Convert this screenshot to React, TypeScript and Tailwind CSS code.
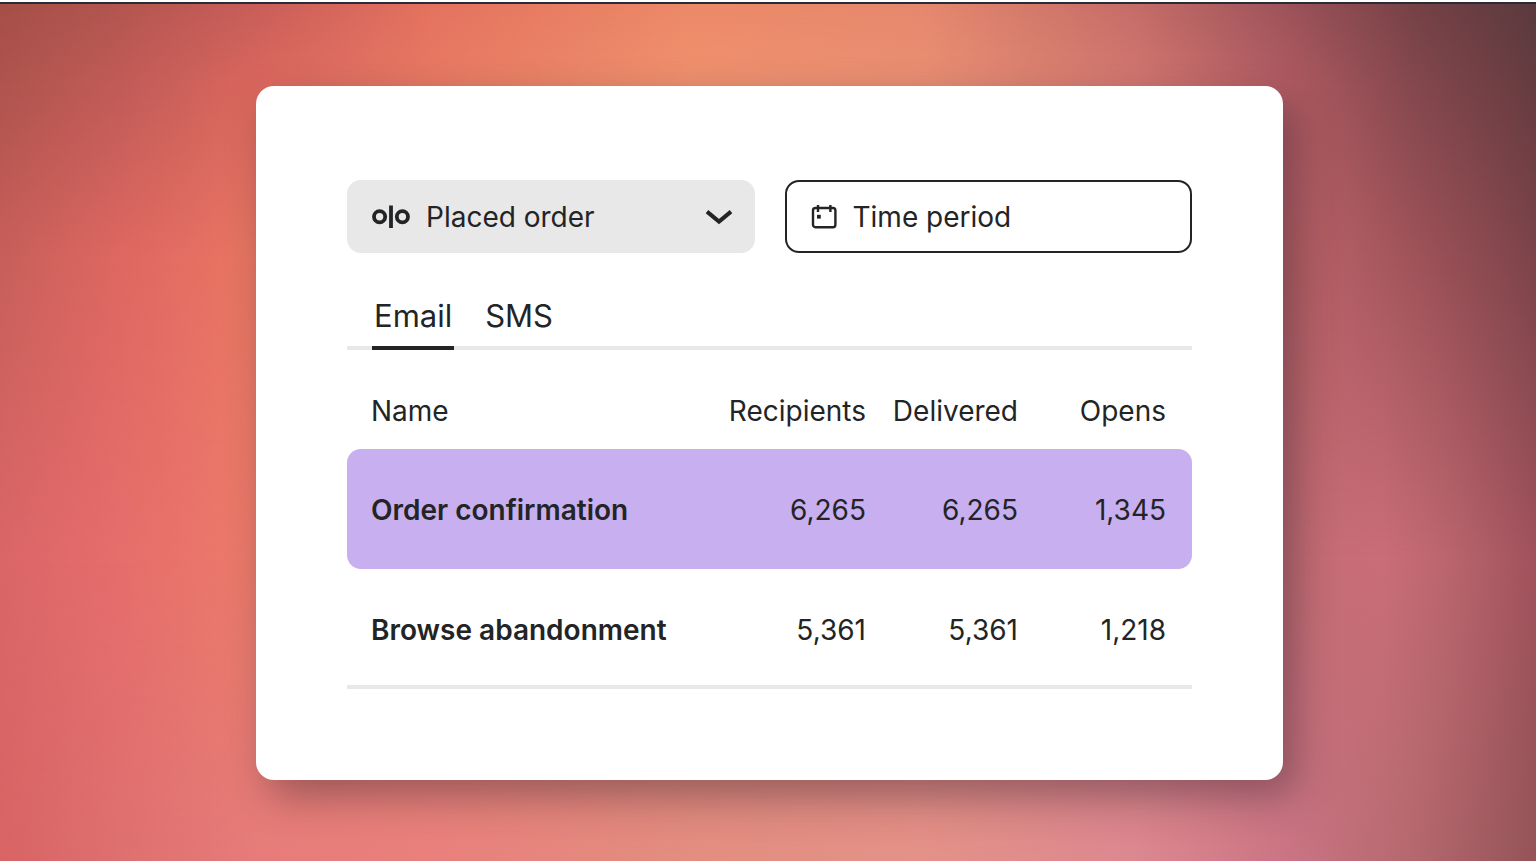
import React, { useState } from 'react';

interface FlowRow {
  name: string;
  recipients: string;
  delivered: string;
  opens: string;
}

const REPORTS: Record<string, FlowRow[]> = {
  Email: [
    { name: 'Order confirmation', recipients: '6,265', delivered: '6,265', opens: '1,345' },
    { name: 'Browse abandonment', recipients: '5,361', delivered: '5,361', opens: '1,218' },
  ],
  SMS: [],
};

const OloLogo: React.FC = () => (
  <svg width="38" height="24" viewBox="0 0 38 24" fill="none" stroke="#232426" strokeWidth="3.8" aria-hidden="true">
    <circle cx="7.6" cy="11.8" r="5.6" />
    <circle cx="30.4" cy="11.8" r="5.6" />
    <path d="M19 0.5v22.5" />
  </svg>
);

const ChevronIcon: React.FC = () => (
  <svg width="28" height="16" viewBox="0 0 28 16" fill="none" stroke="#232426" strokeWidth="4" aria-hidden="true">
    <path d="M2 2.6 14 12.6 26 2.6" />
  </svg>
);

const CalendarIcon: React.FC = () => (
  <svg width="26" height="24" viewBox="0 0 26 24" fill="none" stroke="#232426" strokeWidth="2.4" aria-hidden="true">
    <rect x="2" y="3" width="22.4" height="19.2" rx="2.4" />
    <path d="M7 0v7M19.4 0v7" />
    <rect x="6" y="9.8" width="3.8" height="3.8" fill="#232426" stroke="none" />
  </svg>
);

// Horizontal gradients stacked on top of each other, each one fading in over the one before
const Backdrop: React.FC = () => (
  <div className="absolute inset-0" aria-hidden="true">
    <div className="absolute inset-0 bg-[linear-gradient(90deg,#a54f48_0%,#b45650_8%,#ca5e5a_17%,#e4725f_28%,#ec8a68_45%,#e6886e_60%,#c46c68_74%,#9c525a_84%,#764246_92%,#5a3a3e_100%)]"></div>
    <div className="absolute inset-0 bg-[linear-gradient(90deg,#b0544e_0%,#c25c58_8%,#dc685f_17%,#e87a64_28%,#f0926e_45%,#ea9074_60%,#d27870_74%,#b05a62_84%,#85484e_92%,#663c40_100%)] mask-[linear-gradient(to_bottom,transparent_0%,black_10%)]"></div>
    <div className="absolute inset-0 bg-[linear-gradient(90deg,#c85f5a_0%,#df6862_8%,#ea7862_17%,#ee8466_28%,#d07070_74%,#b65f65_84%,#b05c63_88%,#984f56_94%,#7c444a_100%)] mask-[linear-gradient(to_bottom,transparent_10%,black_30%)]"></div>
    <div className="absolute inset-0 bg-[linear-gradient(90deg,#da6668_0%,#e66e6c_8%,#ec7c6a_17%,#ea8070_28%,#cc7078_74%,#c46c74_84%,#c96e78_90%,#bc6670_94%,#a0525c_100%)] mask-[linear-gradient(to_bottom,transparent_30%,black_65%)]"></div>
    <div className="absolute inset-0 bg-[linear-gradient(90deg,#d86464_0%,#de7070_8%,#e67c7a_17%,#e8807c_28%,#e28e80_45%,#e49288_60%,#dc8890_74%,#ca7484_84%,#b4686e_92%,#945458_100%)] mask-[linear-gradient(to_bottom,transparent_65%,black_100%)]"></div>
  </div>
);

export default function App() {
  const [event, setEvent] = useState('Placed order');
  const [tab, setTab] = useState('Email');

  return (
    <div className="min-h-screen flex flex-col bg-white pt-0.5 font-['Inter','Liberation_Sans',sans-serif] text-[#232426]">
      <main className="relative flex-1 flex items-center border-t-2 border-[#2a2b36] pl-64 pr-[253px] pt-[41px] pb-10">
        <Backdrop />

        <section className="relative w-full rounded-[18px] bg-white pt-[94px] pb-[91px] px-[91px] shadow-[12px_16px_40px_rgba(60,40,50,0.45)]">
          {/* Filters */}
          <div className="grid grid-cols-2 gap-[30px] text-[28px]">
            <div className="relative">
              <select
                aria-label="Event"
                value={event}
                onChange={(e) => setEvent(e.target.value)}
                className="w-full h-[73px] appearance-none rounded-[14px] bg-[#e8e8e8] pl-[79px] pr-16"
              >
                <option>Placed order</option>
                <option>Started checkout</option>
              </select>
              <span className="pointer-events-none absolute inset-y-0 left-[25px] flex items-center">
                <OloLogo />
              </span>
              <span className="pointer-events-none absolute inset-y-0 right-[22px] flex items-center">
                <ChevronIcon />
              </span>
            </div>
            <button type="button" className="flex h-[73px] items-center gap-4 rounded-[14px] border-2 border-[#232426] bg-white px-6">
              <CalendarIcon />
              Time period
            </button>
          </div>

          {/* Channel tabs */}
          <div role="tablist" className="mt-[43px] flex gap-[29px] border-b-4 border-[#e8e8e8] pl-[25px]">
            {Object.keys(REPORTS).map((channel) => (
              <button
                key={channel}
                type="button"
                role="tab"
                aria-selected={tab === channel}
                onClick={() => setTab(channel)}
                className={`-mb-1 border-b-4 px-0.5 pb-2.5 text-[31px] leading-10 ${
                  tab === channel ? 'border-[#232426]' : 'border-transparent'
                }`}
              >
                {channel}
              </button>
            ))}
          </div>

          <table className="w-full table-fixed border-separate border-spacing-0 text-[28px] leading-10">
            <thead>
              <tr className="h-[99px] align-bottom">
                <th className="pb-[18px] pl-6 text-left font-normal">Name</th>
                <th className="w-[152px] pb-[18px] text-right font-normal">Recipients</th>
                <th className="w-[152px] pb-[18px] text-right font-normal">Delivered</th>
                <th className="w-[174px] pb-[18px] pr-[26px] text-right font-normal">Opens</th>
              </tr>
            </thead>
            <tbody>
              {REPORTS[tab].map((row, i) => {
                const cell = i === 0 ? 'bg-[#c8afef] pt-0.5' : 'border-b-4 border-[#e8e8e8] pt-1.5';
                return (
                  <tr key={row.name} className="h-[120px]">
                    <th scope="row" className={`${cell} ${i === 0 ? 'rounded-l-[14px]' : ''} pl-6 text-left font-semibold`}>
                      {row.name}
                    </th>
                    <td className={`${cell} text-right`}>{row.recipients}</td>
                    <td className={`${cell} text-right`}>{row.delivered}</td>
                    <td className={`${cell} ${i === 0 ? 'rounded-r-[14px]' : ''} pr-[26px] text-right`}>{row.opens}</td>
                  </tr>
                );
              })}
            </tbody>
          </table>
        </section>
      </main>
    </div>
  );
}
